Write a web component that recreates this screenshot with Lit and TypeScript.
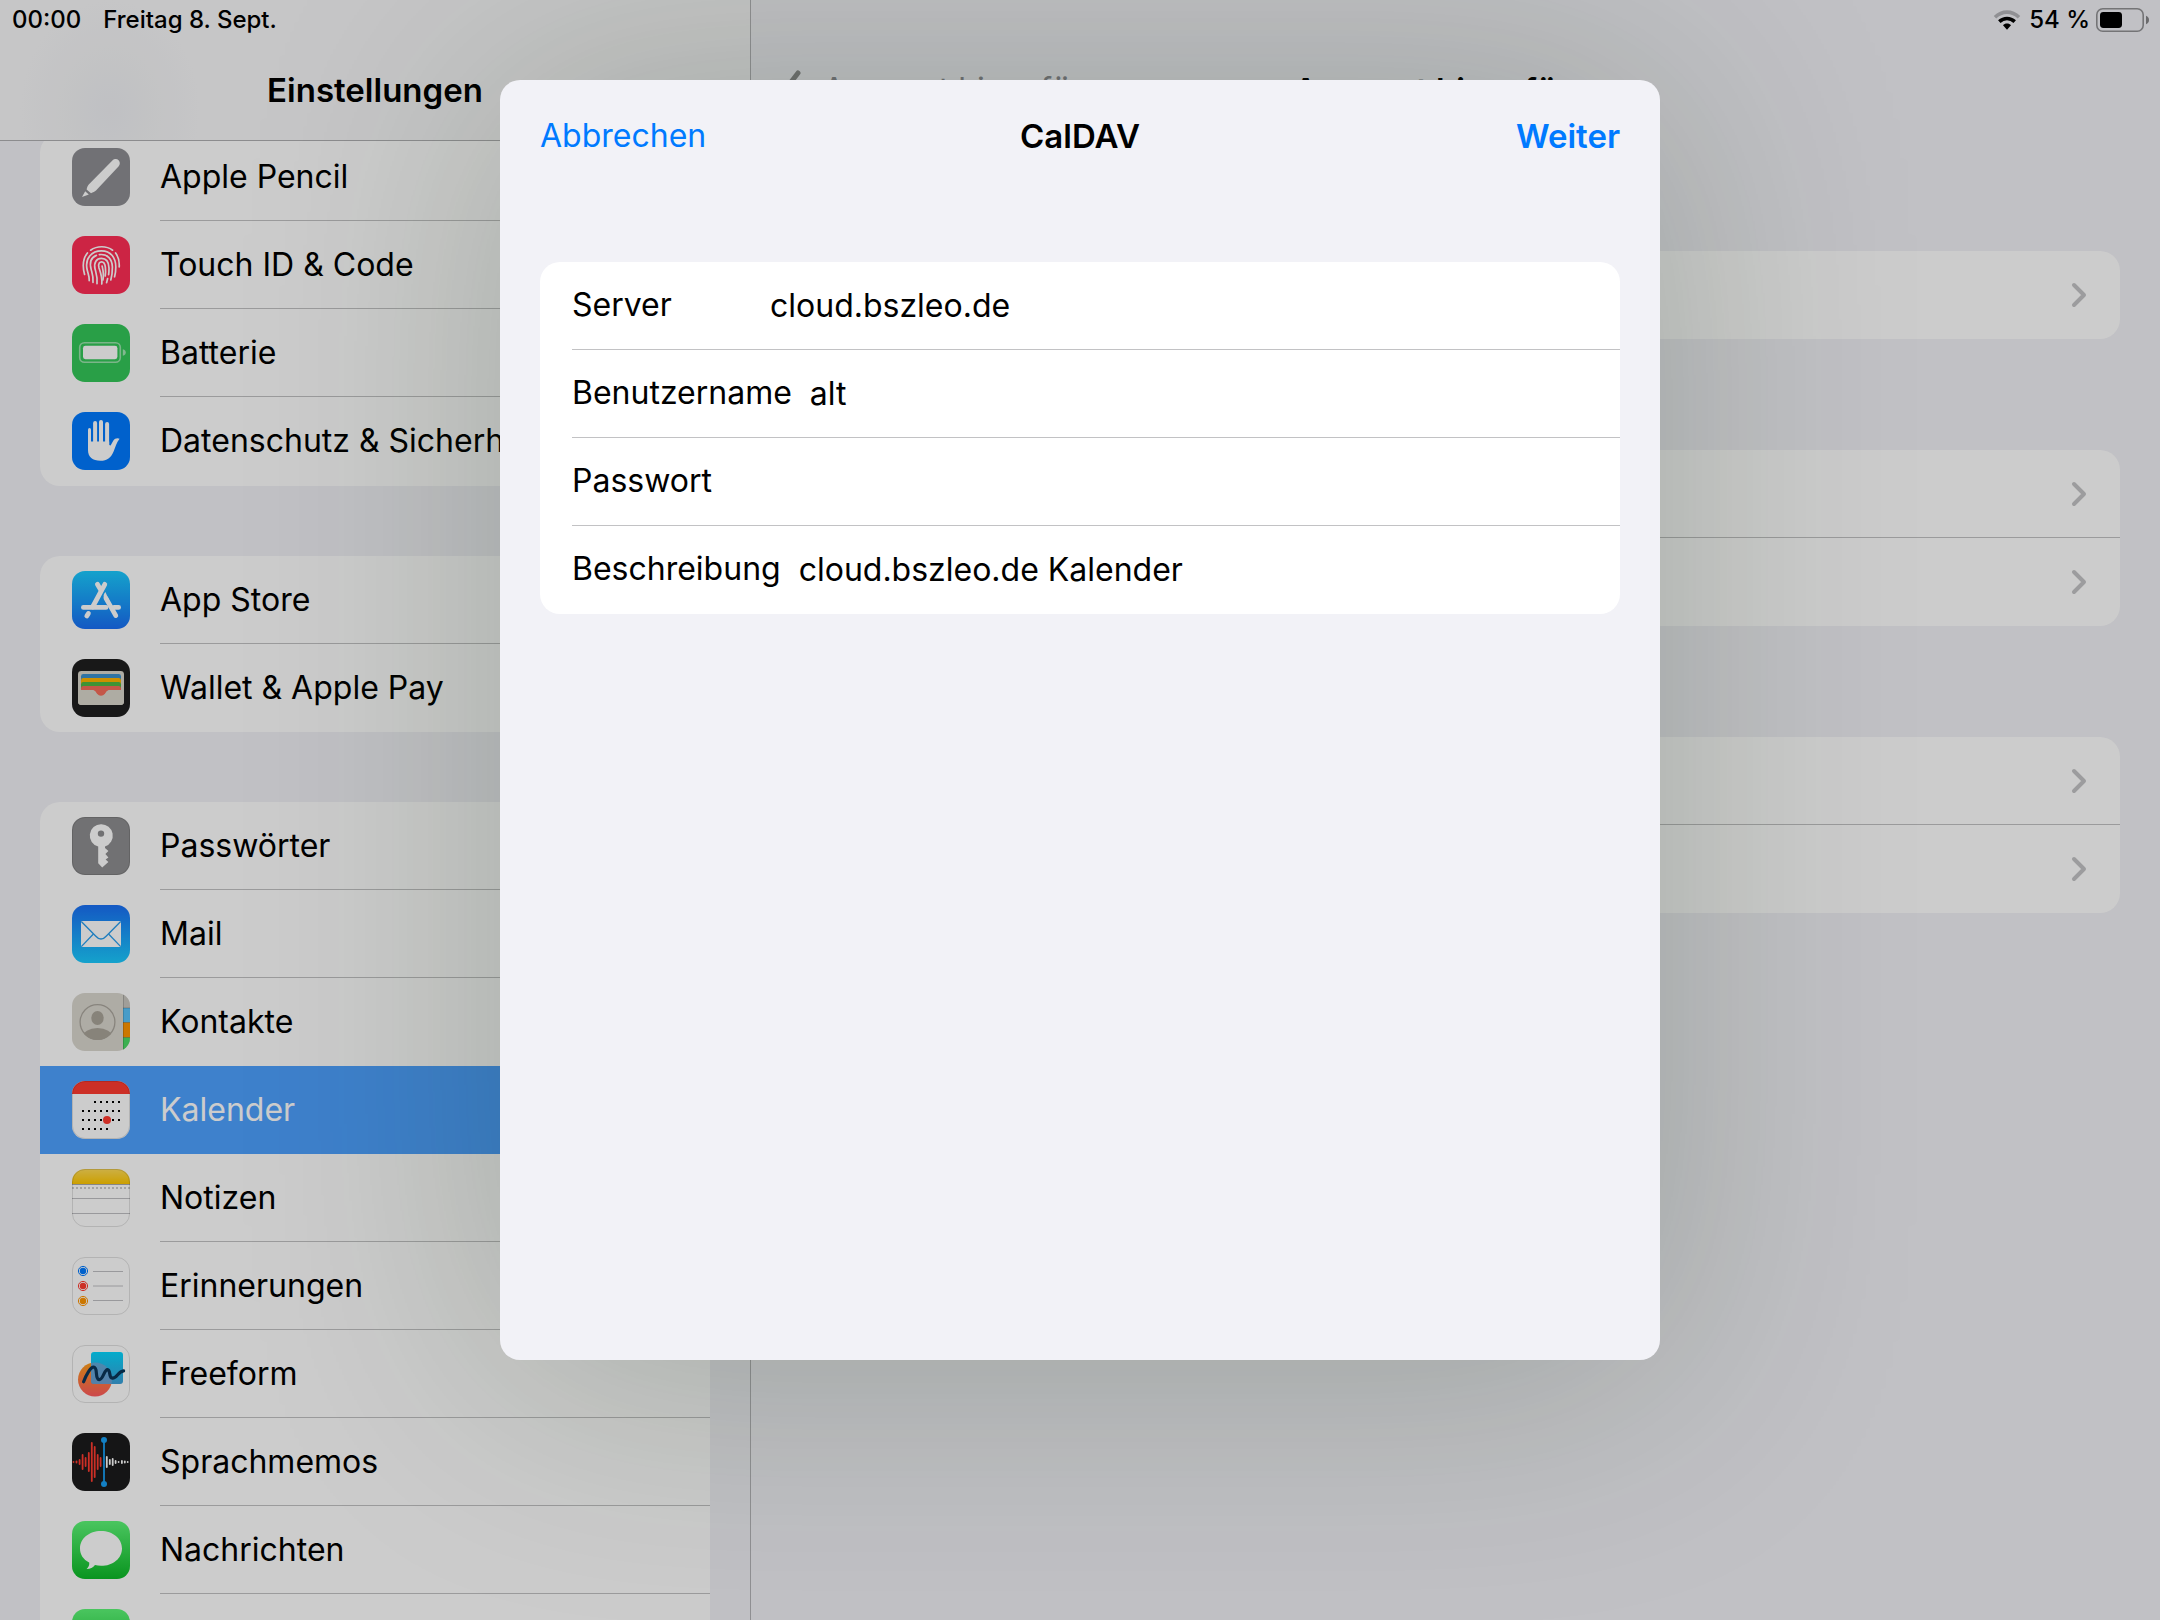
import { LitElement, html, css, svg, nothing } from "lit";
import { customElement, property } from "lit/decorators.js";
import { classMap } from "lit/directives/class-map.js";

const tile = (fill: string) => svg`<rect width="58" height="58" rx="13" fill=${fill}></rect>`;
const edge = svg`<rect x="0.5" y="0.5" width="57" height="57" rx="12.5" fill="none" stroke="#000" stroke-opacity="0.12"></rect>`;

const memoRed: number[][] = [[1.5, 2], [4.5, 3], [7.6, 6], [10.6, 16], [13.6, 10], [16.8, 20], [19.8, 40], [22.7, 32], [25.7, 16], [28.6, 10]];
const memoWhite: number[][] = [[34.8, 12], [37.8, 6], [40.7, 8], [43.6, 4], [46.6, 2], [49.9, 4], [52.8, 3], [55.7, 2]];
const bars = (list: number[][], color: string) =>
  list.map(([x, h]) => svg`<rect x=${x - 0.9} y=${29 - h / 2} width="1.8" height=${h} rx="0.9" fill=${color}></rect>`);

const calendarDots: number[][] = [[23, 29, 35, 41, 47], [11, 17, 23, 29, 35, 41, 47], [11, 17, 23, 29, 41, 47], [11, 17, 23, 29, 35]];

const glyphs: Record<string, unknown> = {
  pencil: svg`${tile("#8e8e93")}
    <path d="M40.4 12.6C42.2 10.8 45 10.6 46.6 12.2C48.3 13.9 48.2 16.6 46.5 18.4L24 42.6C22.8 43.8 21 44.6 19 45.2L14.6 41.6C15 39 15.8 37.4 17 36.2Z" fill="#fff"></path>
    <path d="M13.2 43.2L16.8 46.4L10 49Z" fill="#fff"></path>`,
  touch: svg`${tile("#ff2d55")}
    <g fill="none" stroke="#fff" stroke-width="1.7" stroke-linecap="round">
      <path d="M18.6 14.2C25 9.6 34.5 9.6 40.6 14.2"></path>
      <path d="M12.6 38.4C10 29 11 22.5 15.4 17"></path>
      <path d="M43.6 17C46.6 21 47.6 25.4 47.2 31"></path>
      <path d="M17.2 44.6C17.4 40 16 37.6 15.2 34C12.4 22 20 14.9 29.4 14.9C39 14.9 43.8 22 43.8 31C43.8 35 43.4 38 42.6 40.8"></path>
      <path d="M21 46.4C21.6 41 20.2 37.4 19.2 33.6C17.2 26.4 19.4 21.4 24.4 19.4"></path>
      <path d="M27.4 18.6C35.8 17.6 40.2 23.4 40.4 31C40.4 36 40 40 38.8 44"></path>
      <path d="M25 47.6C25.8 41 24 37 23 32.8C21.6 26.4 24.6 22.4 29.4 22.4C34.2 22.4 36.8 26.4 37 32C37 34.8 37 36.4 36.6 38.6"></path>
      <path d="M35.6 42.6L34.6 46.6"></path>
      <path d="M29.8 48C30.4 41 28.6 36.6 27 32C25.6 27 28.2 25.8 29.6 25.8C31.6 25.8 33 27.6 33.4 31.4C33.8 35 33.6 37.4 33.2 40"></path>
      <path d="M30.1 30C31 34 32.2 38 30.9 44"></path>
    </g>`,
  battery: svg`${tile("#34c759")}
    <rect x="7.7" y="18.7" width="40.6" height="19.6" rx="4.8" fill="none" stroke="#fff" stroke-opacity="0.5" stroke-width="1.6"></rect>
    <rect x="11" y="21.8" width="34.4" height="13.4" rx="2.4" fill="#fff"></rect>
    <path d="M50.8 25.2C53 25.8 53.8 27 53.8 28.5C53.8 30 53 31.2 50.8 31.8Z" fill="#fff" fill-opacity="0.55"></path>`,
  hand: svg`${tile("#007aff")}
    <g stroke="#fff" stroke-linecap="round" fill="none">
      <path d="M17.5 17.5V34" stroke-width="3"></path><path d="M23.1 11V34" stroke-width="4"></path>
      <path d="M29 10V34" stroke-width="4"></path><path d="M35.1 12V34" stroke-width="4"></path>
    </g>
    <path d="M16 29.5H37.2V33L38.6 33.4L41.4 28.4C42.8 26.4 45.6 25.6 47.6 26.8C44.6 30.4 43.8 34.4 41.6 39.4C38.8 45.8 35.2 48.8 28.4 48.8C20.6 48.8 16 45 16 38Z" fill="#fff"></path>`,
  appstore: svg`<defs><linearGradient id="ga" x1="0" y1="0" x2="0" y2="1"><stop offset="0" stop-color="#1bcbff"></stop><stop offset="1" stop-color="#196ff5"></stop></linearGradient></defs>
    ${tile("url(#ga)")}
    <g stroke="#fff" stroke-width="4.8" fill="none" stroke-linecap="round">
      <path d="M25.4 13.3L28.4 18.4"></path>
      <path d="M32.8 13.3L20.6 36"></path>
      <path d="M11.4 36.4H34"></path>
      <path d="M42 36.4H46.6"></path>
      <path d="M16.4 42.4L14.8 45"></path>
      <path d="M34 27.4L43.8 44.6"></path>
    </g>
    <path d="M33.4 21L38 31L32.6 29C31 25.6 31.2 23.6 33.4 21Z" fill="#fff"></path>`,
  wallet: svg`${tile("#1f1f1f")}
    <rect x="6" y="12" width="46" height="34" rx="3.4" fill="#dad7cc"></rect>
    <rect x="9" y="15" width="40" height="12" rx="2.4" fill="#3b91cc"></rect>
    <rect x="9" y="19" width="40" height="12" rx="2.4" fill="#ffb500"></rect>
    <rect x="9" y="23" width="40" height="12" rx="2.4" fill="#4fb843"></rect>
    <rect x="9" y="27" width="40" height="8" rx="2.4" fill="#f56d5a"></rect>
    <path d="M6 31H20C23.4 31 24 33 25 34.4C27.4 37.4 30.6 37.4 33 34.4C34 33 34.6 31 38 31H52V42.6A3.4 3.4 0 0 1 48.6 46H9.4A3.4 3.4 0 0 1 6 42.6Z" fill="#dad7cc"></path>
    <path d="M21.6 31H36.4C34.4 31.4 34 33 33 34.4C30.6 37.4 27.4 37.4 25 34.4C24 33 23.6 31.4 21.6 31Z" fill="#f56d5a"></path>`,
  key: svg`${tile("#8e8e90")}${edge}
    <path fill-rule="evenodd" d="M29 7.2A11.4 11.4 0 0 1 33 29.4V31L36.4 34L33.4 37L36.4 40.6L33.6 42.4L36.4 45L30.2 50.4L26.2 46.2V29.6A11.4 11.4 0 0 1 29 7.2ZM29 13.4A3.2 3.2 0 1 0 29 19.8A3.2 3.2 0 1 0 29 13.4Z" fill="#fff"></path>`,
  mail: svg`<defs><linearGradient id="gm" x1="0" y1="0" x2="0" y2="1"><stop offset="0" stop-color="#196ff5"></stop><stop offset="1" stop-color="#1bcbff"></stop></linearGradient></defs>
    ${tile("url(#gm)")}
    <rect x="9" y="16" width="40" height="26" rx="0.8" fill="#fff"></rect>
    <g fill="none" stroke="#279eef" stroke-width="1.3"><path d="M9.3 16.5L23.6 31C27 35 31 35 34.4 31L48.7 16.5"></path><path d="M9.3 41.6L21.4 29"></path><path d="M48.7 41.6L36.6 29"></path></g>`,
  contacts: svg`<defs><clipPath id="cc"><rect width="58" height="58" rx="13"></rect></clipPath><clipPath id="cp"><circle cx="25.5" cy="29" r="18"></circle></clipPath></defs>
    <g clip-path="url(#cc)">
      <rect width="58" height="58" fill="#dad7cf"></rect>
      <rect x="51" y="0" width="7" height="15" fill="#c8c6c0"></rect>
      <rect x="51" y="15" width="7" height="14.5" fill="#5ac4fb"></rect>
      <rect x="51" y="29.5" width="7" height="15" fill="#ff9500"></rect>
      <rect x="51" y="44.5" width="7" height="14" fill="#4bdc66"></rect>
      <g fill="#000" fill-opacity="0.2"><rect x="51" y="14.5" width="7" height="1"></rect><rect x="51" y="29" width="7" height="1"></rect><rect x="51" y="44" width="7" height="1"></rect><rect x="51" width="0.8" height="58"></rect></g>
    </g>
    <circle cx="25.5" cy="29" r="17.4" fill="none" stroke="#aaa69d" stroke-width="1.3"></circle>
    <ellipse cx="25.5" cy="25" rx="6.2" ry="7" fill="#a9a499"></ellipse>
    <ellipse cx="25.5" cy="44" rx="15" ry="9" fill="#a9a499" clip-path="url(#cp)"></ellipse>`,
  calendar: svg`${tile("#fff")}
    <path d="M0 13A13 13 0 0 1 13 0H45A13 13 0 0 1 58 13Z" fill="#ff3b30"></path>
    ${calendarDots.map((row, r) => row.map((x) => svg`<rect x=${x - 1} y=${20 + r * 9} width="2" height="2" fill="#000"></rect>`))}
    <circle cx="35" cy="39" r="4" fill="#ff3b30"></circle>${edge}`,
  notes: svg`<defs><linearGradient id="gn" x1="0" y1="0" x2="0" y2="1"><stop offset="0" stop-color="#ffdc58"></stop><stop offset="1" stop-color="#ffc800"></stop></linearGradient></defs>
    ${tile("#fff")}
    <path d="M0 15V13A13 13 0 0 1 13 0H45A13 13 0 0 1 58 13V15Z" fill="url(#gn)"></path>
    <path d="M0 15.5H58" stroke="#a9a9a9"></path>
    <path d="M0 19H58" stroke="#ccc" stroke-width="2" stroke-dasharray="2 2"></path>
    <path d="M0 29.5H58M0 44.5H58" stroke="#c0c0c4"></path>${edge}`,
  reminders: svg`${tile("#fff")}${edge}
    ${["#007aff", "#ff3b30", "#ff9500"].map((c, i) => svg`<circle cx="11" cy=${14 + i * 15} r="4.6" fill="none" stroke=${c} stroke-width="1"></circle><circle cx="11" cy=${14 + i * 15} r="3.2" fill=${c}></circle><path d=${`M21 ${14.5 + i * 14.5}H51`} stroke="#c0c0c4"></path>`)}`,
  freeform: svg`<defs>
      <linearGradient id="gf" x1="0" y1="0" x2="0" y2="1"><stop offset="0" stop-color="#ff9f1a"></stop><stop offset="1" stop-color="#ff5a5f"></stop></linearGradient>
      <linearGradient id="gb" x1="0" y1="0" x2="0" y2="1"><stop offset="0" stop-color="#05d7ff"></stop><stop offset="1" stop-color="#3d9fd8"></stop></linearGradient>
      <clipPath id="cs"><rect x="19" y="7" width="32" height="32" rx="3"></rect></clipPath>
    </defs>${tile("#fff")}${edge}
    <circle cx="23" cy="34.5" r="17" fill="url(#gf)"></circle>
    <rect x="19" y="7" width="32" height="32" rx="3" fill="url(#gb)"></rect>
    <circle cx="23" cy="34.5" r="17" fill="#7f9fd0" fill-opacity="0.7" clip-path="url(#cs)"></circle>
    <path d="M11.6 36.8C14 30 18.6 21.8 21.8 22.2C26.4 22.8 22.4 34 27.2 34.6C31 35 32.4 24.4 35.4 24.6C39.2 25 36.2 32.6 40.4 33.2C44.8 33.6 46 26.4 51.6 25.8" fill="none" stroke="#0b3558" stroke-width="3.2" stroke-linecap="round"></path>`,
  memos: svg`${tile("#1b1b1c")}${bars(memoRed, "#ff3b30")}${bars(memoWhite, "#fff")}
    <path d="M32 7V51" stroke="#18a0f5" stroke-width="1.8"></path><circle cx="32" cy="7" r="3" fill="#18a0f5"></circle><circle cx="32" cy="51" r="3" fill="#18a0f5"></circle>`,
  messages: svg`<defs><linearGradient id="gg" x1="0" y1="0" x2="0" y2="1"><stop offset="0" stop-color="#5df777"></stop><stop offset="1" stop-color="#0cba27"></stop></linearGradient></defs>
    ${tile("url(#gg)")}
    <path d="M29 10C41 10 50 17.6 50 27.4C50 37.2 41 44.8 29 44.8C26.8 44.8 25 44.6 23 44C21 46.4 18.4 48 14.6 48C16.6 46 17.6 44 17.2 41.4C11.2 38.4 8 33.4 8 27.4C8 17.6 17 10 29 10Z" fill="#fff"></path>`,
  facetime: svg`<defs><linearGradient id="gt" x1="0" y1="0" x2="0" y2="1"><stop offset="0" stop-color="#5df777"></stop><stop offset="1" stop-color="#0cba27"></stop></linearGradient></defs>
    ${tile("url(#gt)")}<rect x="8" y="18" width="29" height="22" rx="6" fill="#fff"></rect><path d="M39 26L50 19V39L39 32Z" fill="#fff"></path>`,
};

interface Entry {
  icon: string;
  label: string;
}

const groups: Entry[][] = [
  [
    { icon: "pencil", label: "Apple Pencil" },
    { icon: "touch", label: "Touch ID & Code" },
    { icon: "battery", label: "Batterie" },
    { icon: "hand", label: "Datenschutz & Sicherheit" },
  ],
  [
    { icon: "appstore", label: "App Store" },
    { icon: "wallet", label: "Wallet & Apple Pay" },
  ],
  [
    { icon: "key", label: "Passwörter" },
    { icon: "mail", label: "Mail" },
    { icon: "contacts", label: "Kontakte" },
    { icon: "calendar", label: "Kalender" },
    { icon: "notes", label: "Notizen" },
    { icon: "reminders", label: "Erinnerungen" },
    { icon: "freeform", label: "Freeform" },
    { icon: "memos", label: "Sprachmemos" },
    { icon: "messages", label: "Nachrichten" },
    { icon: "facetime", label: "FaceTime" },
  ],
];

const accountGroups: string[][] = [
  ["Mail-Account hinzufügen"],
  ["LDAP-Account hinzufügen", "CardDAV-Account hinzufügen"],
  ["CalDAV-Account hinzufügen", "Kalenderabo hinzufügen"],
];

const fields = [
  { id: "server", label: "Server", type: "text", value: "cloud.bszleo.de" },
  { id: "user", label: "Benutzername", type: "text", value: "alt" },
  { id: "password", label: "Passwort", type: "password", value: "" },
  { id: "description", label: "Beschreibung", type: "text", value: "cloud.bszleo.de Kalender" },
];

@customElement("settings-sidebar")
class SettingsSidebar extends LitElement {
  @property() selected = "Kalender";

  static styles = css`
    :host { display: flex; flex-direction: column; overflow: hidden; border-right: 1px solid #b4b4b8; }
    .head { position: relative; z-index: 1; flex: none; border-bottom: 1px solid #b0b0b2; background: radial-gradient(ellipse 90px 110px at 110px 110px, #f0f1f4, rgba(240, 241, 244, 0)), #f8f8f9; }
    .status { display: flex; align-items: center; gap: 22px; height: 40px; padding: 0 12px; font-size: 24px; font-weight: 500; }
    .title { display: flex; align-items: center; justify-content: center; height: 100px; margin: 0; font-size: 33px; font-weight: 600; }
    .list { display: flex; flex-direction: column; gap: 70px; flex: 1; min-height: 0; overflow: hidden; padding: 0 40px; }
    .group { flex: none; margin: 0; padding: 0; list-style: none; background: #fff; border-radius: 20px; }
    .group:first-child { margin-top: -8px; padding-bottom: 1px; }
    .row { display: flex; align-items: center; height: 88px; padding-left: 32px; gap: 30px; color: #000; text-decoration: none; }
    .icon { flex: none; width: 58px; height: 58px; }
    .label { display: flex; align-items: center; flex: 1; align-self: stretch; box-sizing: border-box; border-bottom: 1px solid #c2c2c4; padding-top: 1px; white-space: nowrap; }
    .plain .label { border-color: transparent; }
    .active { background: #4ea2ff; color: #fff; }
  `;

  render() {
    return html`
      <header class="head">
        <div class="status"><span>00:00</span><span>Freitag 8. Sept.</span></div>
        <h1 class="title">Einstellungen</h1>
      </header>
      <nav class="list">
        ${groups.map((g) => html`<ul class="group">
          ${g.map((e, i) => {
            const active = e.label === this.selected;
            const plain = active || i === g.length - 1 || g[i + 1].label === this.selected;
            return html`<li>
              <a href="#" class=${classMap({ row: true, active, plain })} aria-current=${active ? "page" : nothing}>
                <svg class="icon" viewBox="0 0 58 58" aria-hidden="true">${glyphs[e.icon]}</svg>
                <span class="label">${e.label}</span>
              </a>
            </li>`;
          })}
        </ul>`)}
      </nav>
    `;
  }
}

@customElement("account-pane")
class AccountPane extends LitElement {
  static styles = css`
    :host { display: block; overflow: hidden; }
    .status { display: flex; align-items: center; justify-content: flex-end; height: 40px; padding-right: 10px; font-size: 24px; font-weight: 500; }
    .wifi { width: 28px; height: 20px; margin-right: 8px; }
    .cell { width: 54px; height: 24px; margin-left: 6px; }
    .bar { display: grid; grid-template-columns: 1fr auto 1fr; align-items: center; height: 100px; padding: 0 30px; }
    .back { display: flex; align-items: center; justify-self: start; gap: 20px; border: 0; padding: 0; background: none; font: inherit; color: #8e8e93; }
    .arrow { width: 22px; height: 40px; }
    .title { margin: 0; font-size: 33px; font-weight: 600; }
    .groups { display: flex; flex-direction: column; gap: 111px; padding: 111px 40px 0; }
    .group { margin: 0; padding: 0; list-style: none; background: #fff; border-radius: 20px; }
    .row { display: flex; align-items: center; justify-content: flex-end; height: 88px; box-sizing: border-box; padding-right: 32px; }
    .line { border-bottom: 1px solid #c2c2c4; }
    .chevron { width: 18px; height: 28px; }
  `;

  render() {
    return html`
      <div class="status">
        <svg class="wifi" viewBox="0 0 28 20" aria-hidden="true">
          <path d="M2 7.2C9 0.4 19 0.4 26 7.2" fill="none" stroke="#000" stroke-opacity="0.25" stroke-width="3.6"></path>
          <path d="M6.3 11.6C10.8 7.4 17.2 7.4 21.7 11.6" fill="none" stroke="#000" stroke-width="3.6"></path>
          <path d="M14 13.6C15.6 13.6 17 14.2 18 15.2L14 19.8L10 15.2C11 14.2 12.4 13.6 14 13.6Z"></path>
        </svg>
        <span>54 %</span>
        <svg class="cell" viewBox="0 0 54 24" aria-hidden="true">
          <rect x="0.8" y="0.8" width="46.4" height="22.4" rx="6" fill="none" stroke="#000" stroke-opacity="0.4" stroke-width="1.6"></rect>
          <rect x="4" y="4" width="22" height="16" rx="3.4"></rect>
          <path d="M50 7.8C52 8.6 53 10 53 12C53 14 52 15.4 50 16.2Z" fill-opacity="0.45"></path>
        </svg>
      </div>
      <div class="bar">
        <button class="back">
          <svg class="arrow" viewBox="0 0 22 40" aria-hidden="true"><path d="M17 3L4 20L17 37" fill="none" stroke="#8e8e8e" stroke-width="5" stroke-linecap="round" stroke-linejoin="round"></path></svg>
          <span>Account hinzufügen</span>
        </button>
        <h2 class="title">Account hinzufügen</h2>
      </div>
      <div class="groups">
        ${accountGroups.map((g) => html`<ul class="group">
          ${g.map((label, i) => html`<li>
            <a href="#" class=${classMap({ row: true, line: i < g.length - 1 })} aria-label=${label}>
              <svg class="chevron" viewBox="0 0 18 28" aria-hidden="true"><path d="M4 4L14 14L4 24" fill="none" stroke="#c4c4c6" stroke-width="4" stroke-linecap="round" stroke-linejoin="round"></path></svg>
            </a>
          </li>`)}
        </ul>`)}
      </div>
    `;
  }
}

@customElement("caldav-dialog")
class CaldavDialog extends LitElement {
  static styles = css`
    :host { display: block; box-sizing: border-box; padding: 0 40px 40px; border-radius: 20px; background: #f2f2f7; }
    .bar { display: grid; grid-template-columns: 1fr auto 1fr; align-items: center; height: 112px; }
    .title { margin: 0; font-size: 33px; font-weight: 600; }
    .action { border: 0; padding: 0; background: none; font: inherit; color: #007aff; justify-self: start; }
    .next { justify-self: end; font-size: 33px; font-weight: 600; }
    .card { margin-top: 70px; padding-left: 32px; border-radius: 20px; background: #fff; }
    .field { display: flex; align-items: center; gap: 18px; height: 88px; box-sizing: border-box; border-bottom: 1px solid #c2c2c4; }
    .field:last-child { border-bottom-color: transparent; }
    .name { flex: none; min-width: 180px; padding-bottom: 2px; }
    .value { flex: 1; min-width: 0; border: 0; padding: 0; outline: 0; background: none; font: inherit; color: #000; }
  `;

  render() {
    return html`
      <form @submit=${(e: Event) => e.preventDefault()}>
        <header class="bar">
          <button type="button" class="action">Abbrechen</button>
          <h2 class="title">CalDAV</h2>
          <button type="submit" class="action next">Weiter</button>
        </header>
        <div class="card">
          ${fields.map((f) => html`<div class="field">
            <label class="name" for=${f.id}>${f.label}</label>
            <input class="value" id=${f.id} type=${f.type} .value=${f.value} autocomplete="off" spellcheck="false" />
          </div>`)}
        </div>
      </form>
    `;
  }
}

@customElement("app-root")
class AppRoot extends LitElement {
  static styles = css`
    :host { display: block; position: relative; height: 100vh; overflow: hidden; background: #f2f2f7; color: #000; font: 400 32px/40px Inter, "Liberation Sans", sans-serif; }
    .split { display: grid; grid-template-columns: 751px minmax(0, 1fr); height: 100%; }
    .dim { position: absolute; inset: 0; z-index: 2; display: flex; justify-content: center; align-items: flex-start; padding: 80px 40px; background: rgba(0, 0, 0, 0.2); }
    .sheet { width: 100%; max-width: 1160px; height: 100%; max-height: 1280px; box-shadow: 0 10px 290px rgba(20, 45, 15, 0.22); }
  `;

  render() {
    return html`
      <div class="split">
        <settings-sidebar></settings-sidebar>
        <account-pane></account-pane>
      </div>
      <div class="dim">
        <caldav-dialog class="sheet" role="dialog" aria-label="CalDAV"></caldav-dialog>
      </div>
    `;
  }
}
